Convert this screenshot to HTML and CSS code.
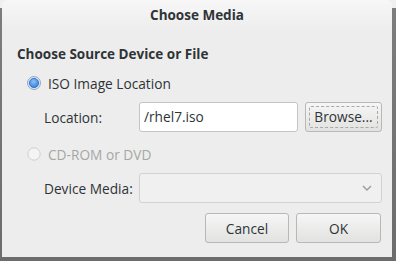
FILE: index.html
```html
<!DOCTYPE html>
<html>
<head>
<meta charset="utf-8">
<link rel="stylesheet" href="styles.css">
</head>
<body>
<div class="frame">
  <div class="dialog">
    <div class="titlebar">Choose Media</div>
    <div class="content">
      <div class="heading">Choose Source Device or File</div>
      <div class="radio-row">
        <svg class="radio" width="14" height="14" viewBox="0 0 14 14">
          <defs>
            <radialGradient id="rg" cx="0.45" cy="0.35" r="0.7">
              <stop offset="0" stop-color="#8ec0f5"/>
              <stop offset="1" stop-color="#2f7be0"/>
            </radialGradient>
          </defs>
          <circle cx="7" cy="7" r="6.5" fill="#dbe6f2" stroke="#8ea9c8" stroke-width="1"/>
          <circle cx="7" cy="7" r="4.6" fill="url(#rg)" stroke="#2a63b8" stroke-width="0.8"/>
        </svg>
        <span>ISO Image Location</span>
      </div>
      <div class="fields">
        <span class="label">Location:</span>
        <div class="entry">/rhel7.iso</div>
        <button class="btn browse"><span class="focus">Browse...</span></button>
      </div>
      <div class="radio-row disabled">
        <svg class="radio" width="14" height="14" viewBox="0 0 14 14">
          <circle cx="7" cy="7" r="6.2" fill="#f4f4f4" stroke="#cfcfcf" stroke-width="1"/>
        </svg>
        <span>CD-ROM or DVD</span>
      </div>
      <div class="fields">
        <span class="label">Device Media:</span>
        <div class="combo">
          <svg width="10" height="6" viewBox="0 0 10 6"><path d="M1 1 L5 5 L9 1" fill="none" stroke="#9a9a9a" stroke-width="1.4"/></svg>
        </div>
      </div>
      <div class="actions">
        <button class="btn action">Cancel</button>
        <button class="btn action">OK</button>
      </div>
    </div>
  </div>
</div>
</body>
</html>
```

FILE: styles.css
```css
html, body {
  margin: 0;
  padding: 0;
  width: 396px;
  height: 261px;
  overflow: hidden;
}
body {
  background: linear-gradient(to bottom, #f0f0f0 0, #f0f0f0 8px, #7d7d7d 8px, #6c6c6c 100%);
  font-family: "Open Sans", "Noto Sans", sans-serif;
  font-size: 13.7px;
  color: #2e3436;
}
.frame {
  padding: 0 4px 4px 2px;
}
.dialog {
  height: 257px;
  background: #ededed;
  border-radius: 6px 6px 0 0;
  display: flex;
  flex-direction: column;
}
.titlebar {
  height: 30px;
  line-height: 30px;
  text-align: center;
  font-weight: 700;
  font-size: 13.5px;
  background: linear-gradient(to bottom, #f7f7f7, #ededed);
  border-radius: 6px 6px 0 0;
}
.content {
  padding: 14px 10px 14px 15px;
  display: flex;
  flex-direction: column;
}
.heading {
  height: 20px;
  line-height: 20px;
  font-weight: 700;
  font-size: 13.5px;
}
.radio-row {
  height: 22px;
  display: flex;
  align-items: center;
  gap: 7px;
  padding-left: 10px;
  margin-top: 8px;
}
.radio-row.disabled {
  color: #a5a7a5;
  margin-top: 11px;
}
.radio {
  display: block;
  flex: none;
}
.fields {
  display: grid;
  grid-template-columns: 88px 1fr auto;
  column-gap: 7px;
  align-items: center;
  padding-left: 27px;
  margin-top: 8px;
}
.label {
  white-space: nowrap;
}
.entry {
  height: 30px;
  box-sizing: border-box;
  background: #fff;
  border: 1px solid #c4c4c2;
  border-radius: 3px;
  padding-left: 4px;
  line-height: 28px;
}
.btn {
  font-family: inherit;
  font-size: 13.7px;
  color: #2e3436;
  background: linear-gradient(to bottom, #f6f6f6, #e2e2e1);
  border: 1px solid #b8b8b6;
  border-radius: 3px;
  box-sizing: border-box;
  height: 30px;
  padding: 0;
  margin: 0;
}
.browse {
  width: 77px;
  padding: 3px;
  display: flex;
}
.focus {
  flex: 1;
  border: 1px dashed #a8a8a8;
  border-radius: 2px;
  line-height: 20px;
}
.combo {
  grid-column: 2 / 4;
  height: 30px;
  box-sizing: border-box;
  background: #f0f0f0;
  border: 1px solid #d2d2d0;
  border-radius: 3px;
  display: flex;
  justify-content: flex-end;
  align-items: center;
  padding-right: 9px;
}
.combo svg {
  display: block;
}
.actions {
  display: flex;
  justify-content: flex-end;
  gap: 7px;
  margin-top: 10px;
  padding-right: 1px;
}
.action {
  width: 84px;
}
.action + .action {
  width: 85px;
}
```
